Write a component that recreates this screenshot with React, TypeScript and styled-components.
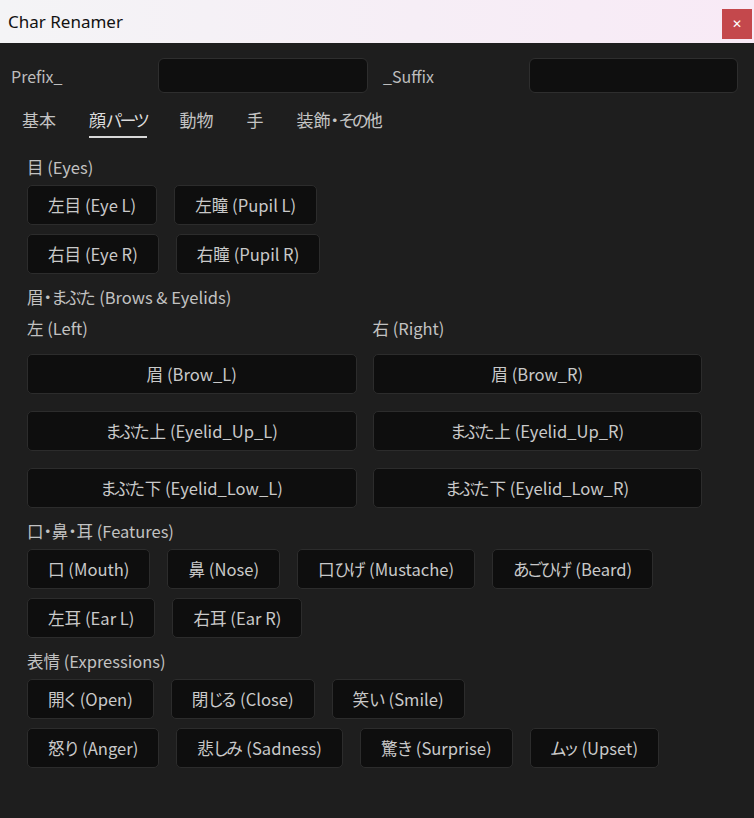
import React, { useState } from "react";
import styled, { createGlobalStyle } from "styled-components";

const GlobalStyle = createGlobalStyle`
  html, body {
    margin: 0;
    padding: 0;
    background: #1e1e1e;
  }
  * { box-sizing: border-box; }
`;

const FONT = `"Noto Sans CJK JP", "Noto Sans", sans-serif`;

const Window = styled.div`
  width: 754px;
  height: 818px;
  background: #1e1e1e;
  display: flex;
  flex-direction: column;
  font-family: ${FONT};
  font-feature-settings: "palt";
  overflow: hidden;
`;

const TitleBar = styled.div`
  height: 43px;
  flex: none;
  display: flex;
  align-items: flex-start;
  justify-content: space-between;
  background: linear-gradient(90deg, #f4f4f6 0%, #f6eef6 55%, #f8eaf6 100%);
`;

const Title = styled.div`
  font-family: "Noto Sans", "Open Sans", sans-serif;
  font-size: 17px;
  line-height: 43px;
  color: #111;
  padding-left: 8px;
`;

const CloseButton = styled.button`
  width: 30px;
  height: 30px;
  margin-top: 9px;
  margin-right: 2px;
  border: none;
  padding: 0;
  background: #c4484c;
  color: #fff;
  font-family: "DejaVu Sans", sans-serif;
  font-weight: bold;
  font-size: 12px;
  line-height: 30px;
  text-align: center;
  cursor: pointer;
`;

const Body = styled.div`
  padding: 15px 16px 0 11px;
  display: flex;
  flex-direction: column;
`;

const FieldsRow = styled.div`
  display: grid;
  grid-template-columns: 132px 210px 131px 209px;
  column-gap: 15px;
  align-items: center;
`;

const FieldLabel = styled.label`
  font-size: 16px;
  color: #bdbdbd;
  line-height: 22px;
`;

const TextInput = styled.input`
  height: 35px;
  width: 100%;
  background: #0f0f0f;
  border: 1px solid #2e2e2e;
  border-radius: 6px;
  color: #ddd;
  font-family: ${FONT};
  font-size: 15px;
  padding: 0 10px;
  outline: none;
`;

const TabBar = styled.div`
  display: flex;
  gap: 33px;
  padding-left: 11px;
  margin-top: 15px;
`;

const Tab = styled.button<{ $active?: boolean }>`
  background: none;
  border: none;
  padding: 0 0 4px 0;
  font-family: ${FONT};
  font-feature-settings: "palt";
  font-size: 17px;
  line-height: 24px;
  color: ${(p) => (p.$active ? "#dcdcdc" : "#c4c4c4")};
  border-bottom: 2px solid ${(p) => (p.$active ? "#d8d8d8" : "transparent")};
  cursor: pointer;
`;

const Content = styled.div`
  width: 691px;
  padding-left: 16px;
  margin-top: 18px;
  display: flex;
  flex-direction: column;
`;

const Section = styled.section<{ $first?: boolean }>`
  margin-top: ${(p) => (p.$first ? 0 : 12)}px;
  display: flex;
  flex-direction: column;
`;

const Heading = styled.div`
  font-size: 16.5px;
  line-height: 22px;
  color: #c2c2c2;
  margin-bottom: 7px;
`;

const Row = styled.div`
  display: flex;
  gap: 17px;
  & + & {
    margin-top: 9px;
  }
`;

const PartButton = styled.button<{ $wide?: boolean }>`
  height: 40px;
  padding: 0 20px;
  background: #0e0e0e;
  border: 1px solid #2c2c2c;
  border-radius: 5px;
  color: #c9c9c9;
  font-family: ${FONT};
  font-feature-settings: "palt";
  font-size: 16.6px;
  white-space: nowrap;
  cursor: pointer;
  width: ${(p) => (p.$wide ? "100%" : "auto")};
`;

const Kana = styled.span<{ $tight?: number }>`
  letter-spacing: -${(p) => p.$tight ?? 1.5}px;
  margin-right: ${(p) => ((p.$tight ?? 1.5) > 2 ? 0 : p.$tight ?? 1.5)}px;
`;

const Columns = styled.div`
  display: grid;
  grid-template-columns: 1fr 1fr;
  column-gap: 16px;
  margin-top: 2px;
`;

const Column = styled.div`
  display: flex;
  flex-direction: column;
  gap: 17px;
`;

const SubLabel = styled.div`
  font-size: 16.5px;
  line-height: 22px;
  color: #c2c2c2;
  margin-bottom: -2px;
`;

const tabs = ["基本", "顔パーツ", "動物", "手", "装飾・その他"];

const eyeRows = [
  ["左目 (Eye L)", "左瞳 (Pupil L)"],
  ["右目 (Eye R)", "右瞳 (Pupil R)"],
];

const browsLeft = ["眉 (Brow_L)", "まぶた上 (Eyelid_Up_L)", "まぶた下 (Eyelid_Low_L)"];
const browsRight = ["眉 (Brow_R)", "まぶた上 (Eyelid_Up_R)", "まぶた下 (Eyelid_Low_R)"];

const featureRows = [
  ["口 (Mouth)", "鼻 (Nose)", "口ひげ (Mustache)", "あごひげ (Beard)"],
  ["左耳 (Ear L)", "右耳 (Ear R)"],
];

const exprRows = [
  ["開く (Open)", "閉じる (Close)", "笑い (Smile)"],
  ["怒り (Anger)", "悲しみ (Sadness)", "驚き (Surprise)", "ムッ (Upset)"],
];

const KANA_RE = /([\u3041-\u309f\u30a0-\u30fa\u30fc-\u30ff]+)/;

function JpText({ text, tight }: { text: string; tight?: number }) {
  const parts = text.split(KANA_RE);
  return (
    <>
      {parts.map((p, i) =>
        i % 2 === 1 ? (
          <Kana key={i} $tight={tight}>
            {p}
          </Kana>
        ) : (
          <React.Fragment key={i}>{p}</React.Fragment>
        )
      )}
    </>
  );
}

function ButtonRows({ rows }: { rows: string[][] }) {
  return (
    <>
      {rows.map((r, i) => (
        <Row key={i}>
          {r.map((label) => (
            <PartButton key={label}>
              <JpText text={label} />
            </PartButton>
          ))}
        </Row>
      ))}
    </>
  );
}

export default function App() {
  const [active, setActive] = useState(1);
  return (
    <>
      <GlobalStyle />
      <Window>
        <TitleBar>
          <Title>Char Renamer</Title>
          <CloseButton aria-label="close">✕</CloseButton>
        </TitleBar>
        <Body>
          <FieldsRow>
            <FieldLabel>Prefix_</FieldLabel>
            <TextInput />
            <FieldLabel>_Suffix</FieldLabel>
            <TextInput />
          </FieldsRow>
          <TabBar>
            {tabs.map((t, i) => (
              <Tab key={t} $active={i === active} onClick={() => setActive(i)}>
                <JpText text={t} tight={2.5} />
              </Tab>
            ))}
          </TabBar>
          <Content>
            <Section $first>
              <Heading>目 (Eyes)</Heading>
              <ButtonRows rows={eyeRows} />
            </Section>
            <Section>
              <Heading>
                <JpText text="眉・まぶた (Brows & Eyelids)" />
              </Heading>
              <Columns>
                <Column>
                  <SubLabel>左 (Left)</SubLabel>
                  {browsLeft.map((b) => (
                    <PartButton key={b} $wide>
                      <JpText text={b} />
                    </PartButton>
                  ))}
                </Column>
                <Column>
                  <SubLabel>右 (Right)</SubLabel>
                  {browsRight.map((b) => (
                    <PartButton key={b} $wide>
                      <JpText text={b} />
                    </PartButton>
                  ))}
                </Column>
              </Columns>
            </Section>
            <Section>
              <Heading>口・鼻・耳 (Features)</Heading>
              <ButtonRows rows={featureRows} />
            </Section>
            <Section>
              <Heading>表情 (Expressions)</Heading>
              <ButtonRows rows={exprRows} />
            </Section>
          </Content>
        </Body>
      </Window>
    </>
  );
}
